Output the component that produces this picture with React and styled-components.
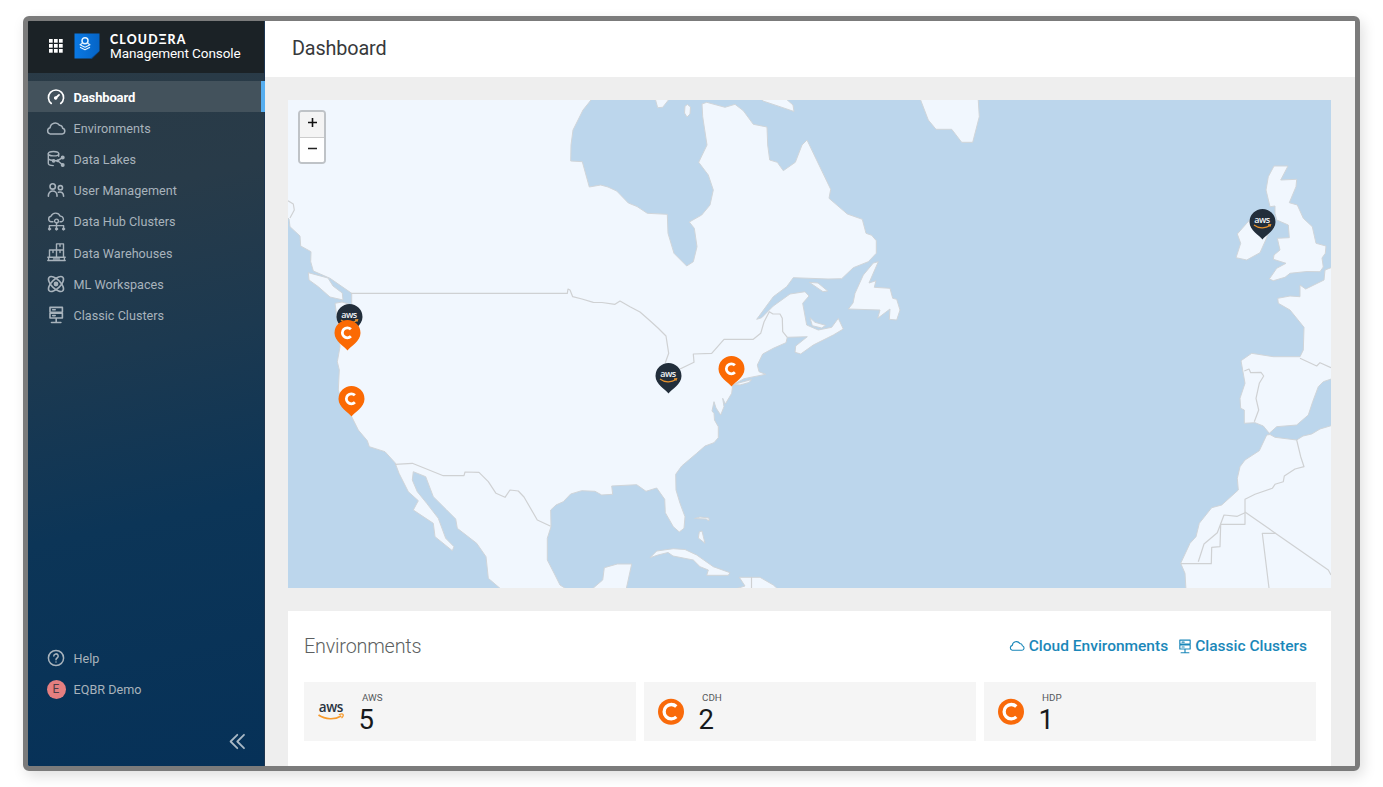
import React from 'react';
import styled, { createGlobalStyle, css } from 'styled-components';

const GlobalStyle = createGlobalStyle`
  * { box-sizing: border-box; }
  html, body { margin: 0; padding: 0; background: #fff; }
  body { font-family: Roboto, "Liberation Sans", sans-serif; overflow: hidden; }
  svg { display: block; overflow: visible; }
`;

const Page = styled.div`
  width: 1383px;
  height: 787px;
  padding: 16px 23px;
  overflow: hidden;
`;

const Frame = styled.div`
  display: flex;
  width: 1337px;
  height: 755px;
  border: 5px solid #7b7b7b;
  border-radius: 6px;
  overflow: hidden;
  box-shadow: 3px 5px 14px rgba(0, 0, 0, 0.13);
`;

const Sidebar = styled.nav`
  display: flex;
  flex-direction: column;
  flex: 0 0 237px;
  background: linear-gradient(168deg, #2a3a45 0%, #283b49 24%, #1c3950 44%, #0c3557 66%, #063158 100%);
  border-right: 1px solid #1d3550;
`;

const Brand = styled.div`
  display: flex;
  align-items: center;
  height: 52px;
  padding: 0 0 2px 21px;
  background: #1b2226;
`;

const Product = styled.div`
  margin-left: 10px;
  padding-top: 2px;
  color: #fff;
`;

const Company = styled.div`
  font: 900 12.3px/13px Lato, "Open Sans", sans-serif;
  letter-spacing: 1.2px;
`;

const ProductName = styled.div`
  font-size: 13.5px;
  line-height: 15px;
  letter-spacing: -0.07px;
  white-space: nowrap;
`;

const NavList = styled.div`
  padding-top: 8px;
`;

const NavItem = styled.a`
  display: flex;
  align-items: center;
  height: 31.2px;
  padding-left: 18px;
  color: #a8b3bc;
  font-size: 12.6px;
  letter-spacing: 0.03px;
  white-space: nowrap;
  ${(p) =>
    p.$active &&
    css`
      color: #fff;
      font-size: 13px;
      font-weight: 700;
      letter-spacing: -0.15px;
      background: #43525c;
      margin-right: -1px;
      border-right: 4px solid #56aef0;
    `}
`;

const NavIcon = styled.span`
  display: flex;
  justify-content: center;
  width: 20px;
  margin-right: 7.5px;
`;

const NavLabel = styled.span`
  padding-top: 1px;
`;

const Spacer = styled.div`
  flex: 1;
`;

const Avatar = styled.span`
  width: 19px;
  height: 19px;
  border-radius: 50%;
  background: #e57f80;
  color: #4c3d48;
  font-size: 12px;
  line-height: 19px;
  letter-spacing: 0;
  text-align: center;
`;

const Collapse = styled.div`
  display: flex;
  justify-content: flex-end;
  padding: 28px 18px 16px 0;
  color: #a9b8c5;
`;

const Main = styled.main`
  display: flex;
  flex-direction: column;
  flex: 1;
  min-width: 0;
  background: #eee;
`;

const TitleBar = styled.header`
  flex: 0 0 56px;
  padding-left: 27px;
  background: #fff;
  color: #37393b;
  font-size: 19.8px;
  line-height: 56px;
  letter-spacing: -0.13px;
`;

const Content = styled.div`
  display: flex;
  flex-direction: column;
  gap: 23px;
  flex: 1;
  padding: 23px 24px 0 23px;
`;

const MapPanel = styled.section`
  position: relative;
  flex: 0 0 488px;
  background: #bcd6ec;
`;

const ZoomControl = styled.div`
  position: absolute;
  left: 10px;
  top: 10px;
  width: 28px;
  height: 54px;
  border: 2px solid #bfc3c7;
  border-radius: 4px;
  background: #fff;
  overflow: hidden;
`;

const ZoomButton = styled.div`
  display: flex;
  align-items: center;
  justify-content: center;
  height: 25px;
  padding-bottom: 4px;
  background: ${(p) => (p.$muted ? '#f4f4f4' : '#fff')};
  & + & { border-top: 1px solid #ccc; }
`;

const Pin = styled.div`
  position: absolute;
  left: ${(p) => p.$x}px;
  top: ${(p) => p.$y}px;
`;

const EnvPanel = styled.section`
  flex: 1;
  padding: 16px 15px 0 16px;
  background: #fff;
`;

const EnvHeader = styled.div`
  display: flex;
  align-items: center;
  height: 38px;
  padding-right: 9px;
`;

const EnvTitle = styled.h2`
  flex: 1;
  margin: 0;
  color: #5c5f61;
  font-size: 19.8px;
  font-weight: 300;
  letter-spacing: -0.18px;
`;

const EnvLink = styled.a`
  display: flex;
  align-items: center;
  gap: 4px;
  margin-left: 11px;
  color: #1a87b9;
  font-size: 15.5px;
  font-weight: 500;
  white-space: nowrap;
`;

const Cards = styled.div`
  display: grid;
  grid-template-columns: repeat(3, 1fr);
  gap: 8px;
  margin-top: 17px;
`;

const Card = styled.div`
  display: flex;
  align-items: center;
  height: 59px;
  padding-left: 13px;
  background: #f5f5f5;
`;

const Stat = styled.div`
  margin-left: 14px;
  padding-top: 4px;
`;

const StatLabel = styled.div`
  padding-left: 3px;
  color: #55595c;
  font-size: 9.8px;
  line-height: 11px;
`;

const StatValue = styled.div`
  margin: 1px 0 0 -0.5px;
  color: #17191b;
  font-size: 27.5px;
  line-height: 32px;
`;

const Line = ({ size = 18, w = 1.5, h, children, box }) => (
  <svg width={size} height={h || size} viewBox={box || '0 0 18 18'} fill="none" stroke="currentColor" strokeWidth={w} strokeLinecap="round" strokeLinejoin="round">
    {children}
  </svg>
);

const GridIcon = () => (
  <svg width="14" height="14" viewBox="0 0 14 14" fill="#fff">
    {[0, 5, 10].map((y) => [0, 5, 10].map((x) => <rect key={`${x}-${y}`} x={x} y={y} width="3.7" height="3.7" />))}
  </svg>
);

const LogoBox = styled.span`
  margin-left: 11px;
`;

const ConsoleLogo = () => (
  <svg width="26" height="26" viewBox="0 0 26 26">
    <defs>
      <linearGradient id="tile" x1="0" y1="0" x2="1" y2="0">
        <stop offset="0" stopColor="#0a79e4" />
        <stop offset="1" stopColor="#0564c6" />
      </linearGradient>
    </defs>
    <path d="M.5.5h25V18L18 25.5H.5z" fill="url(#tile)" />
    <path d="M25.5 18v.3L18 25.5h-1.5z" fill="#07458c" />
    <g fill="none" stroke="#e6f4ff" strokeWidth="1.5" strokeLinejoin="round">
      <circle cx="11" cy="7.7" r="3" />
      <path d="M8.4 10.2 6 11.7l5 2.5 5-2.5-2.4-1.5" strokeWidth="1.1" />
      <path d="m6 14.2 5 2.6 5-2.6" strokeWidth="1.1" />
    </g>
  </svg>
);

const GaugeIcon = () => (
  <Line w={1.6}>
    <path d="M4.3 15.5A7.6 7.6 0 1 1 13.7 15.5" />
    <path d="M8.5 10.3 12 6.9" strokeWidth="1.9" />
    <circle cx="8.7" cy="10" r="1" fill="currentColor" />
  </Line>
);

const CloudIcon = ({ size = 20, w = 1.5 }) => (
  <Line size={size} h={size * 0.7} box="0 0 20 14" w={w}>
    <path d="M4 12.9h12.200a2.900 2.900 0 0 0 .4-5.700 3 3 0 0 0-3.100-2.900A5.200 5.200 0 0 0 4.100 6.700 3.200 3.200 0 0 0 4 12.900z" />
  </Line>
);

const LakeIcon = () => (
  <Line w={1.4}>
    <ellipse cx="6.5" cy="3.7" rx="5.2" ry="2.2" />
    <path d="M1.3 3.7v9.6c0 1.3 2 2.3 5 2.3M11.7 3.7v2.6M1.3 8.2c0 1 1.6 1.8 3.8 2M6.5 10.6l4.2.1 4.8-3.1M10.7 10.7l4.8 4" />
    <circle cx="6.6" cy="10.8" r="1.2" fill="currentColor" />
    <circle cx="15.7" cy="7.4" r="1.3" fill="currentColor" />
    <circle cx="15.7" cy="15" r="1.3" fill="currentColor" />
    <circle cx="10.7" cy="10.7" r=".8" fill="currentColor" />
  </Line>
);

const UsersIcon = () => (
  <Line w={1.6}>
    <circle cx="5.7" cy="5.4" r="2.7" />
    <circle cx="13.4" cy="6.7" r="2.1" />
    <path d="M1.4 15.3v-1a4.3 4.3 0 0 1 8.6 0v1M11.4 11.3c3-1 5.2.6 5.2 4" />
  </Line>
);

const HubIcon = () => (
  <Line size={19} box="0 0 19 19" w={1.4}>
    <path d="M6 9.8H3.9A2.8 2.8 0 0 1 4 4.3a5 5 0 0 1 9.2-.2c3.3-.1 4.6 4.9 1.3 5.6H13" />
    <circle cx="9.5" cy="9" r="1.9" />
    <path d="M9.5 11v5M2.4 16v-2.4h14.2V16" />
    <g fill="currentColor" strokeWidth=".8">
      <circle cx="2.5" cy="17" r="1.2" />
      <circle cx="9.5" cy="17" r="1.2" />
      <circle cx="16.5" cy="17" r="1.2" />
    </g>
  </Line>
);

const WarehouseIcon = () => (
  <Line size={19} box="0 0 19 19" w={1.4}>
    <path d="M9.5 7V.9h7V14M9.5 7h7M2.500 14V7h7v7M13 .9v2.300M6 7v2.500M13 7v2.500" />
    <path d="M.8 14.300h17.400M.8 17.500h17.400M1.600 14.300v3M17.400 14.300v3M6.500 15.900h6" />
  </Line>
);

const AtomIcon = () => (
  <Line w={1.6}>
    <ellipse cx="9" cy="9" rx="9.6" ry="4.5" transform="rotate(45 9 9)" />
    <ellipse cx="9" cy="9" rx="9.6" ry="4.5" transform="rotate(-45 9 9)" />
    <circle cx="9" cy="9" r="1.6" fill="currentColor" />
  </Line>
);

const ServerIcon = ({ size = 18, w = 1.6 }) => (
  <Line size={size * 0.8} h={size} w={w} box="1.8 0 14.4 18">
    <path d="M2.800 1.400h12.400v4.800H2.800zM2.800 7.200h12.400V12H2.800zM9 12v4.500M4.300 16.500h9.400M5.500 3.800h2.500M5.500 9.600h2.500" />
  </Line>
);

const HelpIcon = () => (
  <Line w={1.5}>
    <circle cx="9" cy="9" r="7.6" />
    <path d="M6.8 7.1a2.2 2.2 0 1 1 3.3 1.900c-.8.5-1.100.8-1.100 1.700M9 12.900v.2" />
  </Line>
);

const CollapseIcon = () => (
  <Line size={17} box="0 0 17 17" w={1.8}>
    <path d="M8.3 1.8 1.6 8.5l6.7 6.7M15 1.8 8.3 8.5l6.7 6.7" />
  </Line>
);

const PIN_SHAPE = 'M13.5 30.5C10.8 26.8.5 21.2.5 13a13 13 0 0 1 26 0c0 8.2-10.3 13.8-13 17.5z';

const CPin = () => (
  <svg width="27" height="31" viewBox="0 0 27 31">
    <path d={PIN_SHAPE} fill="#fb6a04" />
    <path d="M16.9 9.3A5 5 0 1 0 16.9 16.3" fill="none" stroke="#fff" strokeWidth="2.800" />
  </svg>
);

const AwsPin = () => (
  <svg width="27" height="31" viewBox="0 0 27 31">
    <path d={PIN_SHAPE} fill="#222e3b" />
    <text x="13.2" y="13.6" textAnchor="middle" fontFamily='"Open Sans", sans-serif' fontWeight="600" fontSize="9" textLength="16" fill="#f1f4f7">aws</text>
    <path d="M5 16c4.500 3.600 11.500 3.700 16 .6M19 15.800l2.600-.2-.6 2" fill="none" stroke="#e8922c" strokeWidth="1.200" />
  </svg>
);

const AwsLogo = () => (
  <svg width="28" height="24" viewBox="0 0 28 24">
    <text x="14" y="12" textAnchor="middle" fontFamily='"Open Sans", sans-serif' fontWeight="600" fontSize="13.5" textLength="24.5" fill="#283340">aws</text>
    <path d="M1.5 15c7 4.800 16.500 4.800 22.800 1" fill="none" stroke="#f79a2b" strokeWidth="1.700" />
    <path d="M21.800 14.700c2-.8 3.800-.8 4.200-.3s-.1 2.400-1.500 3.800" fill="none" stroke="#f79a2b" strokeWidth="1.200" />
  </svg>
);

const CLogo = () => (
  <svg width="28" height="28" viewBox="0 0 28 28">
    <circle cx="14" cy="13.7" r="13" fill="#f96a0a" />
    <path d="M19.300 8.500A7.200 7.200 0 1 0 19.300 18.900" fill="none" stroke="#fff" strokeWidth="3.300" />
  </svg>
);

const LANDS = [
  // North America with Mexico and Baja California
  'M280 90H597L591 100 583 110 573 130 571 145 570.7 161 582.3 161.7 589.3 187 600.7 185 608 187 616.7 191 628.3 203 637 206.500 647.300 213.300 667.300 214.300 668 233.300 674 253.300 686.700 266 693.300 261.700 697 246.700 694.300 228.300 689.300 222 701.700 215 710 205 713.300 190 708.300 175 698.700 162.300 707 145 702.700 116.700 702 104 706.700 102.300 725 107.300 735 104.300 743.300 110.700 753.300 124.300 767 127 767.700 145 769.700 160 777.300 162.300 783.300 170.700 795.300 162.300 802 145 807 140 830.700 189.300 829 198.300 847.300 214 862.300 219.300 866 233.300 871.700 235.300 876.300 240.700V253.300L868.300 261.700 853.300 267.700 841.700 278.700 828 279 793.300 277.700 786.700 286.700 773.300 296.700 756.700 319.300 761.700 317.700 773.300 306 790 294 805 291.700 809 296 802.700 303.300 806.700 325 818.300 330 831.700 327.300 838.300 318.300 843.300 329 833.300 335 813.300 345 800.700 354 795 352.300 795.700 346 807.300 336.700 787.300 337.300 786 342.700 773.300 348.300 762.700 354 757.300 365 759 371.700 765.700 374.300 744 378.700 732.700 385 731.700 393.300 725.300 404 722.700 398.300 724 406.700 720.700 415 716 408 714 401.700 712 411 714 413.300 714.500 420 718.300 426.700V437.700L714 442.700 705 446 696.700 453.300 681.700 466 675.700 474.300 676 490 680 503.300 685 516.700 684 528.300 679.300 532 673.300 526.700 665.300 512.700 664.700 499.300 656.700 488 646 491.300 636.700 484.700 611.700 486 612.700 494.300 601.700 495 595 491.300 581.700 490.700 570.700 494 563.300 501.700 556 505 550.700 510 551 526.700 547.300 538.300V560L555 575 560 585 568 590H502L488.300 578.300 486 556.700 476.700 543.300 457.300 528.300 455.700 519 446.700 510 433.300 496.700 425.700 476.700 413.300 471.700 412.300 480 417.300 491.700 426.700 503.300 438.300 518.300 445.700 538.300 454 546.700 452.300 550.700 435 536.700 433.300 523.300 413.300 510 418.300 500.700 408.300 491.700 399 473.300 395 462.700 385 451.700 369.300 446.700 367.300 440.700 358.300 430 351.700 416.700 342 402 338.300 390 339.300 370 337.300 361.700 340 346.700 338 325 335 303.300 342 302 351.700 305V293.300L330 278.300 313.300 271 310.700 261.700 311 251.700 300.700 246 300 236 290 226.700 289 219 280 210z',
  'M308.300 272.700 328 278 333 286 342.300 293 343 300 330 297 318.300 286.700 309 280z',
  'M591 590 602.700 580 604.300 567.700 617.300 564H631.700L626 590z',
  'M878.300 261.700 869 283 876 280.700 874.300 287.300 890 288.300 892.700 298.300 896.700 299.300 900 310 896.700 320 889.300 319.300 890 309 877.700 318.300 880 310 848.300 309 853 303 855 293.300 863.300 275 873.300 263z',
  'M809.300 282.300 818 283 827.700 291 823 291.700z',
  'M810 317.700 815 322.300 825.700 325.300 821.700 328 812.300 325.700z',
  'M655 98 657.700 107.700 662.700 107.300 670 98z',
  'M687.500 104.500 690.500 107 690 114 687 117 684.500 113 685 106z',
  'M758 96 763 101 780 106.700 794 111.500 793 105 785 98z',
  'M919 96 921 101 928.300 120 936 129.300H951.700L961.700 142.300H972.700L979.300 116.700 978 96z',
  'M650 557.700 656.700 551 673.300 548.700 685 549.500 696.700 555 713.300 566.700 730 572.700 728.300 575.300H706.700L708.300 570 700 566.700 693.300 560 673 556 668 552.500 658 555z',
  'M739.300 577.300H760L773.300 585 779 590H732L745 586z',
  'M699.300 531.700 702 531 705 543.300 698.300 538z',
  'M694.500 518.500 700 517 709 518 709 521 706 519z',
  'M733 384.500 751.700 379.500 749 382.500 740 385z',
  'M1274 166H1288L1280.700 180 1296.700 179.300 1296 186.700 1289.300 202.700 1297.300 205 1303.300 218.300 1312.300 226.700 1316 243.300 1326 246 1325.300 253.300 1322 258 1323.300 267 1320 271.700 1307 271.500 1290 273.300 1285 277.300 1273.300 280.700 1269.300 279 1276.700 268.300 1286 263.300 1273.300 259.300 1274 255 1280 250 1277.300 238.300 1289.300 237.700 1288.300 225 1276.700 220 1275 213.300 1275 206 1270 206.700 1266 190 1268.300 176.700z',
  'M1246.700 223.300 1237.300 234 1240.700 243.300 1236 257.700 1246.700 260 1260 252.700 1265.700 240 1271 227 1270 214 1256 213z',
  'M1340 262 1331 267.700 1325 270 1324 280 1305.700 289 1300 285V296.700L1290 296 1277.700 298.300 1278.300 303.300 1290 310 1304 327.300 1303.300 350 1300 356.700H1273.300L1251.700 353.300 1241 360.700 1245 383.300 1240 398.300 1240.700 408.300 1244.300 410V423.300L1255 422.700 1263.300 426 1269.300 433.300 1276.700 426.700 1296.700 425 1308.300 415 1312.700 401.700 1318.300 386.700 1323.300 381.700 1340 376z',
  'M1340 424 1331 425.700 1320 429 1311.700 434 1303 436 1296.700 440 1275 437.300 1270 434.500 1266.700 435 1259.300 450.700 1245 460 1240 466.700 1237.300 478.300 1238.300 490 1221.700 505 1211.700 507.700 1199.300 523.300 1196 536.700 1190 543.300 1180.700 563.300 1185 573.300 1186 590 1186 600H1340z',
];

const BORDERS = [
  'M288 200.700 293.300 204 294.300 210 290 218',
  'M351 293.300H567.300L568 289 570 290 572.700 296.700 582 299 593.300 302.300 602 302.500 615 304.300 620 301 630 306.700 640 312 648.300 319.300 658 328 666 336 668.700 353.300 665.300 362.700',
  'M680 369 694 362.300 693.300 354 711.700 353.300 724 339.300H753.300L760.700 333.300 764 322 769.300 311.700 773 314 780 314 782.300 318.300 782.700 331.700 787.300 337.300',
  'M395 464.300 412.300 463.300 443.300 475.700H464L465 472 479 472.300 488.300 481.700 496 493.300 505 497.300 510 490 518.300 491 524 497 537.300 520 550.700 526.300',
  'M751.500 577V588',
  'M1300 358.300 1316.700 366 1320 362.700 1331 367.700',
  'M1244.300 371 1249 369 1250.700 372.700 1261 372.300 1263.700 376 1259.300 383.300 1256 398.300 1258.700 410 1254.300 421.700',
  'M1296.700 440 1300.700 456.700 1304 466.700 1295 469 1284.300 476 1283.300 481.700 1275 484.300 1272.300 488.300 1255 494.300 1245 499.300V524.300H1220.700L1220 546.700 1211.700 547.300 1211.300 563.700H1181',
  'M1245 512.700 1237.300 516.300 1224 515 1217.300 532.700 1204 544 1198.300 561.700',
  'M1245 512 1328.300 570 1331 575',
  'M1275.700 533.300H1262.300L1269 588',
];

const MapClip = styled.div`
  height: 488px;
  overflow: hidden;
`;

const WorldMap = () => (
  <svg width="1043" height="488" viewBox="288 100 1043 488">
    <g fill="#f1f7fe" stroke="#d0d5d9" strokeWidth="1" strokeLinejoin="round">
      {LANDS.map((d) => <path key={d} d={d} />)}
    </g>
    <g fill="none" stroke="#cfd1d3" strokeWidth="1.2" strokeLinejoin="round">
      {BORDERS.map((d) => <path key={d} d={d} />)}
    </g>
  </svg>
);

const NAV = [
  ['Dashboard', GaugeIcon],
  ['Environments', CloudIcon],
  ['Data Lakes', LakeIcon],
  ['User Management', UsersIcon],
  ['Data Hub Clusters', HubIcon],
  ['Data Warehouses', WarehouseIcon],
  ['ML Workspaces', AtomIcon],
  ['Classic Clusters', ServerIcon],
];

const PINS = [
  [47.5, 204, AwsPin],
  [46, 220, CPin],
  [49.5, 285.5, CPin],
  [366.5, 263, AwsPin],
  [429.5, 255.5, CPin],
  [961, 109, AwsPin],
];

const STATS = [
  ['AWS', 5, AwsLogo],
  ['CDH', 2, CLogo],
  ['HDP', 1, CLogo],
];

export default function App() {
  return (
    <Page>
      <GlobalStyle />
      <Frame>
        <Sidebar>
          <Brand>
            <GridIcon />
            <LogoBox><ConsoleLogo /></LogoBox>
            <Product>
              <Company>CLOUDΞRA</Company>
              <ProductName>Management Console</ProductName>
            </Product>
          </Brand>
          <NavList>
            {NAV.map(([label, Icon], i) => (
              <NavItem key={label} $active={i === 0}>
                <NavIcon><Icon /></NavIcon>
                <NavLabel>{label}</NavLabel>
              </NavItem>
            ))}
          </NavList>
          <Spacer />
          <NavItem><NavIcon><HelpIcon /></NavIcon><NavLabel>Help</NavLabel></NavItem>
          <NavItem><NavIcon><Avatar>E</Avatar></NavIcon><NavLabel>EQBR Demo</NavLabel></NavItem>
          <Collapse><CollapseIcon /></Collapse>
        </Sidebar>
        <Main>
          <TitleBar>Dashboard</TitleBar>
          <Content>
            <MapPanel>
              <MapClip><WorldMap /></MapClip>
              {PINS.map(([x, y, Shape]) => (
                <Pin key={`${x}-${y}`} $x={x} $y={y}><Shape /></Pin>
              ))}
              <ZoomControl>
                <ZoomButton $muted>
                  <svg width="9" height="9" viewBox="0 0 9 9" stroke="#111" strokeWidth="1.6"><path d="M0 4.5H9M4.5 0V9" /></svg>
                </ZoomButton>
                <ZoomButton>
                  <svg width="9" height="9" viewBox="0 0 9 9" stroke="#222" strokeWidth="1.7"><path d="M0 4.5H9" /></svg>
                </ZoomButton>
              </ZoomControl>
            </MapPanel>
            <EnvPanel>
              <EnvHeader>
                <EnvTitle>Environments</EnvTitle>
                <EnvLink><CloudIcon size={16} w={1.4} />Cloud Environments</EnvLink>
                <EnvLink><ServerIcon size={15} w={1.4} />Classic Clusters</EnvLink>
              </EnvHeader>
              <Cards>
                {STATS.map(([label, value, Logo]) => (
                  <Card key={label}>
                    <Logo />
                    <Stat>
                      <StatLabel>{label}</StatLabel>
                      <StatValue>{value}</StatValue>
                    </Stat>
                  </Card>
                ))}
              </Cards>
            </EnvPanel>
          </Content>
        </Main>
      </Frame>
    </Page>
  );
}
